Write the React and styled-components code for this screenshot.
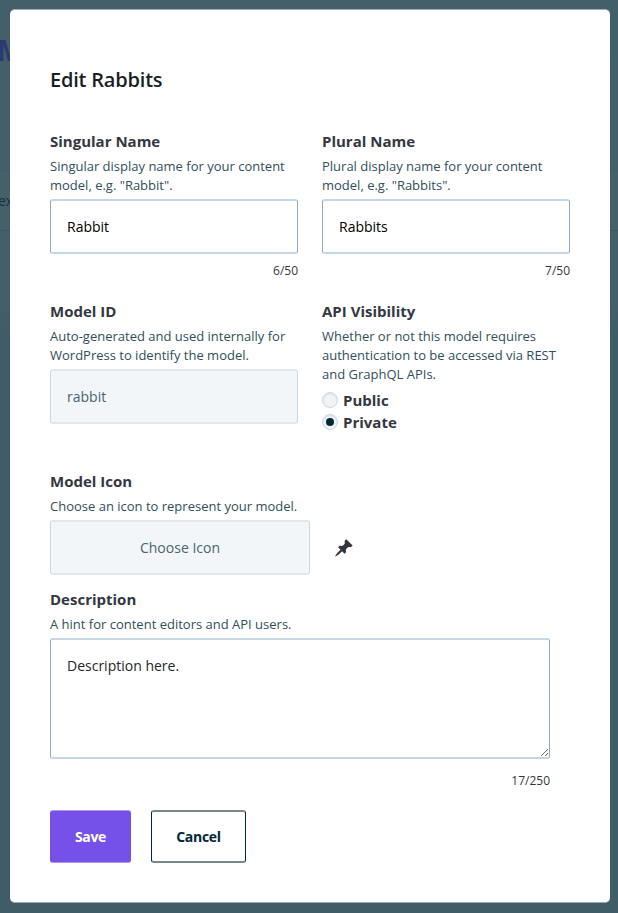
import React from "react";
import styled, { createGlobalStyle, css } from "styled-components";

const GlobalStyle = createGlobalStyle`
  *, *::before, *::after { box-sizing: border-box; }
  body {
    margin: 0;
    font-family: "Open Sans", "Noto Sans", sans-serif;
    color: #343741;
    background: #405c66;
  }
`;

const Page = styled.div`
  position: relative;
  height: 913px;
  padding: 9px 8px 10px 10px;
  overflow: hidden;
  background: linear-gradient(#435f69, #455f6a 300px, #405c66 340px);
`;

const BackdropPanel = styled.div`
  position: absolute;
  inset: 170px 0 auto 0;
  height: 61px;
  background: #466069;
  border-top: 1px solid #425b66;
  border-bottom: 1px solid #3e5863;
`;

const BackdropText = styled.span`
  position: absolute;
  left: ${(p) => p.$left}px;
  top: ${(p) => p.$top}px;
  font-size: ${(p) => p.$size}px;
  font-weight: ${(p) => p.$weight};
  line-height: 1;
  color: ${(p) => p.$color};
`;

const Modal = styled.form`
  position: relative;
  height: 894px;
  padding: 58px 40px 0;
  background: #fff;
  border: solid #9facb1;
  border-width: 1px 0;
  border-radius: 5px;
`;

const Title = styled.h2`
  margin: 0 0 39px;
  font-size: 20px;
  line-height: 24px;
  font-weight: 600;
  letter-spacing: -0.2px;
  color: #1a1f24;
`;

const Columns = styled.div`
  display: grid;
  grid-template-columns: 248px 248px;
  column-gap: 24px;
  height: 170px;
`;

const Field = styled.div`
  display: flex;
  flex-direction: column;
  align-items: flex-start;
  width: ${(p) => p.$width || "auto"};
  height: ${(p) => p.$height || "auto"};
`;

const Label = styled.label`
  font-size: 15px;
  line-height: 20px;
  font-weight: 700;
  margin-bottom: 6px;
`;

const Hint = styled.p`
  margin: 0 0 4px;
  font-size: 13px;
  line-height: 19px;
  color: #2f4f5b;
`;

const control = css`
  font: 400 14px/20px "Open Sans", "Noto Sans", sans-serif;
  border: solid;
  border-width: 2px 1px;
  border-color: #c4d5e6 #8fabc9;
  border-radius: 3px;
  outline: none;
  background: #fff;
  color: #000;
`;

const muted = css`
  background: #f2f6f9;
  border-color: #dfe8ef #c9d7e3;
  color: #48656f;
`;

const Input = styled.input`
  ${control}
  width: 100%;
  height: 55px;
  padding: 0 16px;
  &:disabled { ${muted} }
`;

const TextArea = styled.textarea`
  ${control}
  display: block;
  width: 100%;
  height: 121px;
  padding: 16px;
  color: #23282d;
  resize: vertical;
`;

const Counter = styled.span`
  align-self: flex-end;
  margin-top: ${(p) => p.$gap}px;
  font-size: 12px;
  line-height: 16px;
`;

const IconRow = styled.div`
  display: flex;
  align-items: center;
  gap: 24px;
`;

const IconButton = styled.button`
  ${control}
  ${muted}
  width: 260px;
  height: 55px;
`;

const PinIcon = styled.svg`
  width: 20px;
  height: 20px;
  fill: #32373c;
`;

const RadioGroup = styled.div`
  padding-top: 1px;
`;

const RadioLabel = styled.label`
  display: flex;
  align-items: center;
  gap: 5px;
  height: 22px;
  font-size: 15px;
  font-weight: 700;
`;

const Radio = styled.input`
  appearance: none;
  display: grid;
  place-items: center;
  width: 16px;
  height: 16px;
  margin: 0;
  border: 1px solid #cbd9e5;
  border-radius: 50%;
  background: #f0f4f8;
  box-shadow: inset 0 1px 2px rgba(0, 0, 0, 0.1);
  &:checked::before {
    content: "";
    width: 8px;
    height: 8px;
    border-radius: 50%;
    background: #002838;
  }
`;

const Actions = styled.div`
  display: flex;
  gap: 20px;
`;

const Button = styled.button`
  width: ${(p) => p.$width}px;
  height: 53px;
  padding: 0;
  font: 700 14px/20px "Open Sans", "Noto Sans", sans-serif;
  letter-spacing: -0.3px;
  border-style: solid;
  border-radius: 3px;
  ${(p) =>
    p.$primary
      ? css`
          color: #fff;
          background: #7551e9;
          border-color: #ad98f1;
          border-width: 1px 0;
        `
      : css`
          color: #002838;
          background: #fff;
          border-color: #76898f #002838;
          border-width: 2px 1px;
        `}
`;

export default function App() {
  return (
    <Page>
      <GlobalStyle />
      <BackdropPanel />
      <BackdropText $left={-3} $top={36} $size={28} $weight={700} $color="#2b3a72">M</BackdropText>
      <BackdropText $left={-2} $top={194} $size={14} $weight={500} $color="#0f3340">ex</BackdropText>
      <Modal>
        <Title>Edit Rabbits</Title>
        <Columns>
          <Field>
            <Label htmlFor="singular">Singular Name</Label>
            <Hint>Singular display name for your content model, e.g. "Rabbit".</Hint>
            <Input id="singular" defaultValue="Rabbit" />
            <Counter $gap={9}>6/50</Counter>
          </Field>
          <Field>
            <Label htmlFor="plural">Plural Name</Label>
            <Hint>Plural display name for your content model, e.g. "Rabbits".</Hint>
            <Input id="plural" defaultValue="Rabbits" />
            <Counter $gap={9}>7/50</Counter>
          </Field>
        </Columns>
        <Columns>
          <Field>
            <Label htmlFor="model-id">Model ID</Label>
            <Hint>Auto-generated and used internally for WordPress to identify the model.</Hint>
            <Input id="model-id" defaultValue="rabbit" disabled />
          </Field>
          <Field>
            <Label as="span">API Visibility</Label>
            <Hint>Whether or not this model requires authentication to be accessed via REST and GraphQL APIs.</Hint>
            <RadioGroup>
              <RadioLabel><Radio type="radio" name="visibility" />Public</RadioLabel>
              <RadioLabel><Radio type="radio" name="visibility" defaultChecked />Private</RadioLabel>
            </RadioGroup>
          </Field>
        </Columns>
        <Field $height="118px">
          <Label as="span">Model Icon</Label>
          <Hint>Choose an icon to represent your model.</Hint>
          <IconRow>
            <IconButton type="button">Choose Icon</IconButton>
            <PinIcon viewBox="0 0 20 20" aria-hidden="true">
              <path d="M10.44 3.02l1.82-1.82 6.36 6.35-1.83 1.82c-1.05-.68-2.48-.57-3.41.36l-.75.75c-.92.93-1.04 2.35-.35 3.41l-1.83 1.82-2.41-2.41-2.8 2.79c-.42.42-3.38 2.71-3.8 2.29s1.86-3.39 2.28-3.81l2.79-2.79L4.1 9.36l1.83-1.82c1.05.69 2.48.57 3.4-.36l.75-.75c.93-.92 1.05-2.35.36-3.41z" />
            </PinIcon>
          </IconRow>
        </Field>
        <Field $width="500px" $height="221px">
          <Label htmlFor="description">Description</Label>
          <Hint>A hint for content editors and API users.</Hint>
          <TextArea id="description" defaultValue="Description here." />
          <Counter $gap={14}>17/250</Counter>
        </Field>
        <Actions>
          <Button type="button" $primary $width={81}>Save</Button>
          <Button type="button" $width={95}>Cancel</Button>
        </Actions>
      </Modal>
    </Page>
  );
}
